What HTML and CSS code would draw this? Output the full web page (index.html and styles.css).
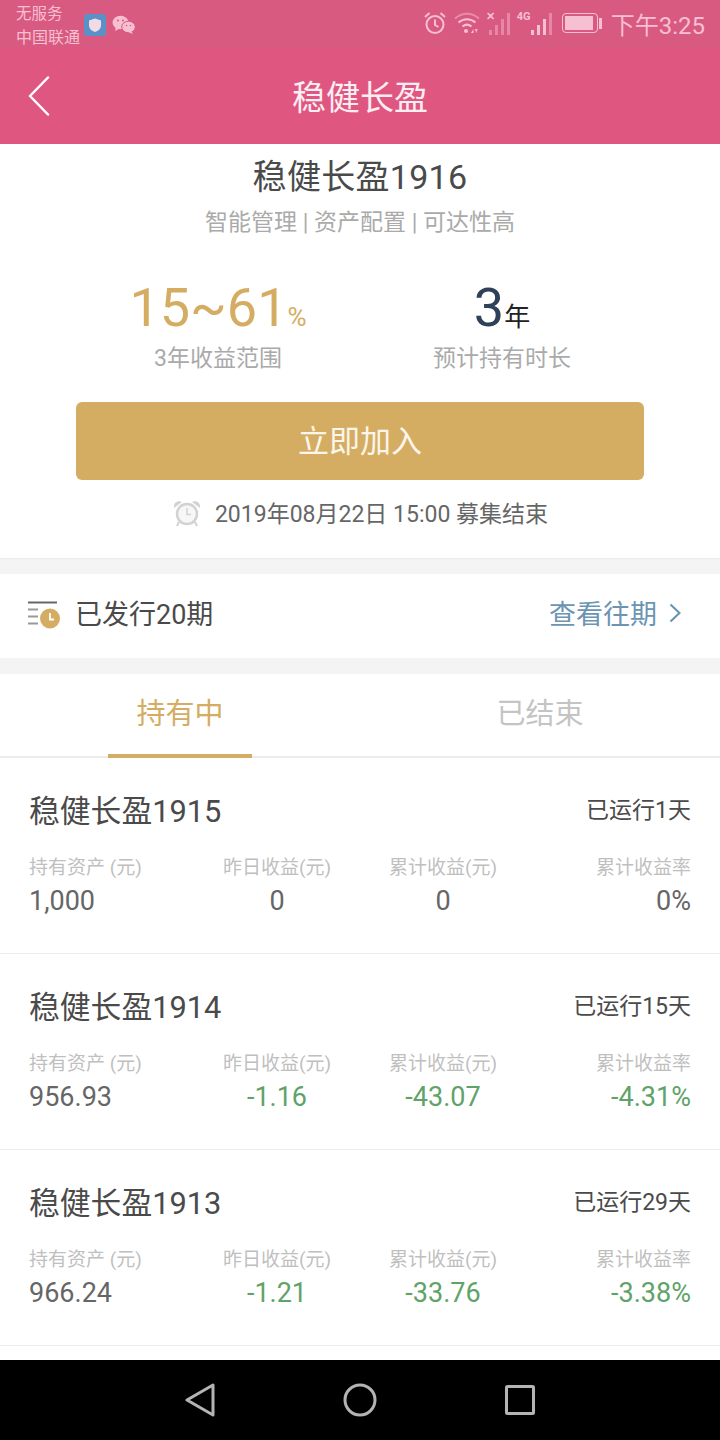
FILE: index.html
```html
<!DOCTYPE html>
<html lang="zh">
<head>
    <meta charset="UTF-8">
    <meta name="viewport" content="width=device-width, initial-scale=1.0">
    <title>稳健长盈</title>
    <link rel="stylesheet" href="styles.css">
</head>
<body>
    <div class="phone">
        <div class="status-bar">
            <div class="status-left">
                <div class="carrier"><div class="no-service">无服务</div><div>中国联通</div></div>
                <svg class="shield" width="22" height="22" viewBox="0 0 22 22"><rect width="22" height="22" rx="3" fill="#5a92c8"/><path d="M11 4.500l6 2v5c0 3.500-3 5.500-6 6.500-3-1-6-3-6-6.500v-5z" fill="#f3dbe6"/></svg>
                <svg class="wechat" width="24" height="20" viewBox="0 0 24 20"><ellipse cx="8.500" cy="7.500" rx="8" ry="6.800" fill="#f7bfd2"/><path d="M4 12l-1 4 4-2z" fill="#f7bfd2"/><circle cx="6" cy="5.500" r="1" fill="#da5a81"/><circle cx="11" cy="5.500" r="1" fill="#da5a81"/><ellipse cx="16.500" cy="12" rx="6.800" ry="5.800" fill="#f7bfd2" stroke="#da5a81" stroke-width="1"/><path d="M19 16l2 3-4-1.500z" fill="#f7bfd2"/><circle cx="14.500" cy="10.500" r=".8" fill="#da5a81"/><circle cx="18.500" cy="10.500" r=".8" fill="#da5a81"/></svg>
            </div>
            <div class="status-right">
                <svg width="24" height="24" viewBox="0 0 24 24" fill="none" stroke="#f7bfd2" stroke-width="2"><circle cx="12" cy="13.500" r="8.500"/><path d="M12 8.500v5.500l3.500 2M2 6l4.500-4M22 6l-4.500-4"/></svg>
                <svg class="wifi" width="26" height="22" viewBox="0 0 26 22" fill="none" stroke="#f7bfd2" stroke-width="2"><path d="M1 6.500c7-6.500 17-6.500 24 0" opacity=".5"/><path d="M4.500 10.500c5-4.500 12-4.500 17 0"/><path d="M8.500 14.500c3-2.500 6-2.500 9 0"/><circle cx="12" cy="19" r="2" fill="#f7bfd2" stroke="none"/><path d="M17 21l2.500-4v4zM21 17h2.500l-1.200 4z" fill="#f7bfd2" stroke="none"/></svg>
                <div class="signal sim1">
                    <span class="sig-mark">✕</span>
                    <i class="dim h1"></i><i class="dim h2"></i><i class="dim h3"></i><i class="dim h4"></i>
                </div>
                <div class="signal sim2">
                    <span class="sig-mark">4G</span>
                    <i class="h1"></i><i class="h2"></i><i class="h3"></i><i class="dim h4"></i>
                </div>
                <div class="battery"><div class="battery-fill"></div></div>
                <div class="battery-tip"></div>
                <span class="clock">下午3:25</span>
            </div>
        </div>
        <header class="nav">
            <svg class="back" width="22" height="40" viewBox="0 0 22 40" fill="none" stroke="#fff" stroke-width="2.500" stroke-linecap="round" stroke-linejoin="round"><path d="M20 1.500L2 20l18 18.500"/></svg>
            <h1>稳健长盈</h1>
        </header>

        <section class="product">
            <h2>稳健长盈1916</h2>
            <p class="tagline">智能管理 | 资产配置 | 可达性高</p>
            <div class="stats">
                <div class="stat">
                    <div class="stat-value gold">15~61<small>%</small></div>
                    <div class="stat-label">3年收益范围</div>
                </div>
                <div class="stat">
                    <div class="stat-value navy">3<small>年</small></div>
                    <div class="stat-label">预计持有时长</div>
                </div>
            </div>
            <button type="button" class="join">立即加入</button>
            <div class="deadline">
                <svg class="alarm" width="30" height="28" viewBox="0 0 30 28" fill="none"><circle cx="15" cy="15" r="10" fill="#f7f7f7" stroke="#d2d2d2" stroke-width="2.500"/><path d="M15 9v6.500h4" stroke="#d2d2d2" stroke-width="1.500"/><path d="M2 9c-1-5 4-8 8-6zM28 9c1-5-4-8-8-6z" fill="#d2d2d2"/><path d="M7 23l-2 4M23 23l2 4" stroke="#d2d2d2" stroke-width="2"/></svg>
                <span>2019年08月22日 15:00 募集结束</span>
            </div>
        </section>

        <section class="issued">
            <div class="issued-left">
                <svg width="34" height="32" viewBox="0 0 34 32"><path d="M1 5.500h29" stroke="#666" stroke-width="2" fill="none"/><path d="M1 12.500h10M1 19.500h10M1 26.500h10" stroke="#999" stroke-width="2" fill="none"/><circle cx="23" cy="21.500" r="10" fill="#d4ad63"/><path d="M23 16v6.500h4" stroke="#fff" stroke-width="1.800" fill="none"/></svg>
                <span>已发行20期</span>
            </div>
            <div class="issued-link">
                <span>查看往期</span>
                <svg width="12" height="20" viewBox="0 0 12 20" fill="none" stroke="#6b95b3" stroke-width="2.200"><path d="M1.500 1.500L10.500 10l-9 8.500"/></svg>
            </div>
        </section>

        <section class="tabs">
            <div class="tab active">持有中<div class="tab-line"></div></div>
            <div class="tab">已结束</div>
        </section>

        <section class="holding">
            <div class="holding-head"><h3>稳健长盈1915</h3><span>已运行1天</span></div>
            <div class="cols">
                <div class="col col-a"><label>持有资产 (元)</label><b>1,000</b></div>
                <div class="col col-b"><label>昨日收益(元)</label><b>0</b></div>
                <div class="col col-c"><label>累计收益(元)</label><b>0</b></div>
                <div class="col col-d"><label>累计收益率</label><b>0%</b></div>
            </div>
        </section>
        <section class="holding">
            <div class="holding-head"><h3>稳健长盈1914</h3><span>已运行15天</span></div>
            <div class="cols">
                <div class="col col-a"><label>持有资产 (元)</label><b>956.93</b></div>
                <div class="col col-b"><label>昨日收益(元)</label><b class="down">-1.16</b></div>
                <div class="col col-c"><label>累计收益(元)</label><b class="down">-43.07</b></div>
                <div class="col col-d"><label>累计收益率</label><b class="down">-4.31%</b></div>
            </div>
        </section>
        <section class="holding">
            <div class="holding-head"><h3>稳健长盈1913</h3><span>已运行29天</span></div>
            <div class="cols">
                <div class="col col-a"><label>持有资产 (元)</label><b>966.24</b></div>
                <div class="col col-b"><label>昨日收益(元)</label><b class="down">-1.21</b></div>
                <div class="col col-c"><label>累计收益(元)</label><b class="down">-33.76</b></div>
                <div class="col col-d"><label>累计收益率</label><b class="down">-3.38%</b></div>
            </div>
        </section>
        <div class="spacer"></div>

        <footer class="softkeys">
            <svg width="30" height="34" viewBox="0 0 30 34" fill="none" stroke="#b4b4b4" stroke-width="3" stroke-linejoin="round"><path d="M2 17L28 2v30z"/></svg>
            <svg width="34" height="34" viewBox="0 0 34 34" fill="none" stroke="#b4b4b4" stroke-width="3"><circle cx="17" cy="17" r="15"/></svg>
            <svg width="30" height="30" viewBox="0 0 30 30" fill="none" stroke="#b4b4b4" stroke-width="3" stroke-linejoin="round"><rect x="1.500" y="1.500" width="27" height="27" rx="1"/></svg>
        </footer>
    </div>
</body>
</html>
```

FILE: styles.css
```css
* {
    box-sizing: border-box;
}
body {
    margin: 0;
    font-family: Roboto, "Noto Sans CJK SC", sans-serif;
    background-color: #fff;
}
.phone {
    width: 720px;
    height: 1440px;
    display: flex;
    flex-direction: column;
    overflow: hidden;
}

/* status bar */
.status-bar {
    height: 48px;
    background-color: #d95a81;
    color: #f7bfd2;
    display: flex;
    justify-content: space-between;
    padding: 0 15px 0 16px;
}
.status-left {
    display: flex;
    align-items: flex-start;
}
.carrier {
    font-size: 16px;
    line-height: 23px;
    padding-top: 3px;
    width: 68px;
}
.no-service {
    font-size: 15.500px;
}
.shield {
    margin-top: 14px;
}
.wechat {
    margin: 15px 0 0 6px;
}
.status-right {
    display: flex;
    align-items: center;
    height: 48px;
    padding-bottom: 2px;
}
.wifi {
    margin-left: 7px;
}
.signal {
    position: relative;
    width: 24px;
    height: 24px;
    margin-left: 6px;
    display: flex;
    align-items: flex-end;
    justify-content: flex-end;
    gap: 3px;
}
.sim2 {
    width: 35px;
    margin-left: 7px;
}
.signal i {
    width: 3px;
    background-color: #f7bfd2;
}
.signal i.dim {
    opacity: .45;
}
.h1 { height: 5px; }
.h2 { height: 10px; }
.h3 { height: 16px; }
.h4 { height: 22px; }
.sig-mark {
    position: absolute;
    left: 0;
    top: 0;
    font-size: 11px;
    line-height: 12px;
    font-weight: bold;
}
.battery {
    width: 36px;
    height: 20px;
    margin-left: 10px;
    border: 1.500px solid #f7bfd2;
    border-radius: 4px;
    padding: 2px;
}
.battery-fill {
    height: 100%;
    width: 28px;
    background-color: #f7bfd2;
}
.battery-tip {
    width: 3px;
    height: 11px;
    margin-left: 1px;
    background-color: #f7bfd2;
}
.clock {
    font-size: 24px;
    margin-left: 9px;
}

/* header */
.nav {
    height: 96px;
    background-color: #df5781;
    position: relative;
    display: flex;
    align-items: center;
    justify-content: center;
    padding-bottom: 2px;
}
.nav h1 {
    margin: 0;
    font-size: 34px;
    font-weight: 400;
    color: #fbeef2;
}
.back {
    position: absolute;
    left: 28px;
    top: 28px;
}

/* product */
.product {
    height: 415px;
    flex-shrink: 0;
    border-bottom: 1px solid #ececec;
    display: flex;
    flex-direction: column;
    align-items: center;
}
.product h2 {
    margin: 9px 0 0;
    font-size: 34px;
    line-height: 48px;
    font-weight: 400;
    color: #4a4a4a;
    letter-spacing: .3px;
}
.tagline {
    margin: 4px 0 0;
    font-size: 23px;
    line-height: 36px;
    color: #aaa;
}
.stats {
    width: 100%;
    display: grid;
    grid-template-columns: 300px 268px;
    padding-left: 68px;
    margin-top: 43px;
}
.stat {
    text-align: center;
}
.stat-value {
    font-size: 54px;
    line-height: 48px;
}
.stat-value small {
    font-size: 26px;
}
.gold {
    color: #d4ad63;
}
.navy {
    color: #2f4059;
}
.navy small {
    color: #222;
}
.stat-label {
    font-size: 23px;
    line-height: 36px;
    color: #aaa;
}
.join {
    flex-shrink: 0;
    width: 568px;
    height: 78px;
    margin-top: 25px;
    padding-bottom: 6px;
    background-color: #d4ad63;
    color: #fbf5ea;
    border: none;
    border-radius: 6px;
    font-family: inherit;
    font-size: 31px;
}
.deadline {
    display: flex;
    align-items: center;
    gap: 13px;
    margin-top: 16px;
    font-size: 23px;
    color: #666;
    height: 32px;
}
.alarm {
    margin-top: 2px;
}

/* issued row */
.issued {
    height: 84px;
    flex-shrink: 0;
    margin-top: 15px;
    display: flex;
    align-items: center;
    justify-content: space-between;
    padding: 0 39px 7px 27px;
    box-shadow: 0 -15px 0 #f4f4f4;
}
.issued-left {
    display: flex;
    align-items: center;
    gap: 14px;
    font-size: 27px;
    color: #4a4a4a;
}
.issued-link {
    display: flex;
    align-items: center;
    gap: 12px;
    font-size: 27px;
    color: #6b95b3;
}

/* tabs */
.tabs {
    height: 84px;
    flex-shrink: 0;
    margin-top: 16px;
    display: flex;
    border-bottom: 2px solid #ececec;
    box-shadow: 0 -16px 0 #f4f4f4;
}
.tab {
    position: relative;
    width: 361px;
    text-align: center;
    font-size: 29px;
    line-height: 80px;
    color: #c4c4c4;
}
.tab.active {
    color: #d4ad63;
}
.tab-line {
    position: absolute;
    left: 108px;
    bottom: -2px;
    width: 144px;
    height: 4px;
    background-color: #d4ad63;
}

/* holdings */
.holding {
    height: 196px;
    flex-shrink: 0;
    padding: 27px 29px 0;
    border-bottom: 1px solid #ececec;
}
.holding-head {
    display: flex;
    justify-content: space-between;
    align-items: center;
    height: 46px;
}
.holding-head h3 {
    margin: 0;
    font-size: 30.800px;
    font-weight: 400;
    color: #4a4a4a;
}
.holding-head span {
    font-size: 23px;
    color: #4a4a4a;
}
.cols {
    display: flex;
    margin-top: 21px;
}
.col label {
    display: block;
    font-size: 19px;
    line-height: 31px;
    color: #bfbfbf;
}
.col b {
    display: block;
    font-weight: 400;
    font-size: 27px;
    line-height: 36px;
    color: #666;
}
.col b.down {
    color: #5fa368;
}
.col-a {
    width: 180px;
}
.col-b {
    width: 136px;
    text-align: center;
}
.col-c {
    width: 196px;
    text-align: center;
    white-space: nowrap;
}
.col-d {
    flex: 1;
    text-align: right;
}

.spacer {
    height: 14px;
}
.softkeys {
    height: 80px;
    flex-shrink: 0;
    background-color: #000;
    display: flex;
    align-items: center;
    padding-left: 185px;
    gap: 128px;
}
```
